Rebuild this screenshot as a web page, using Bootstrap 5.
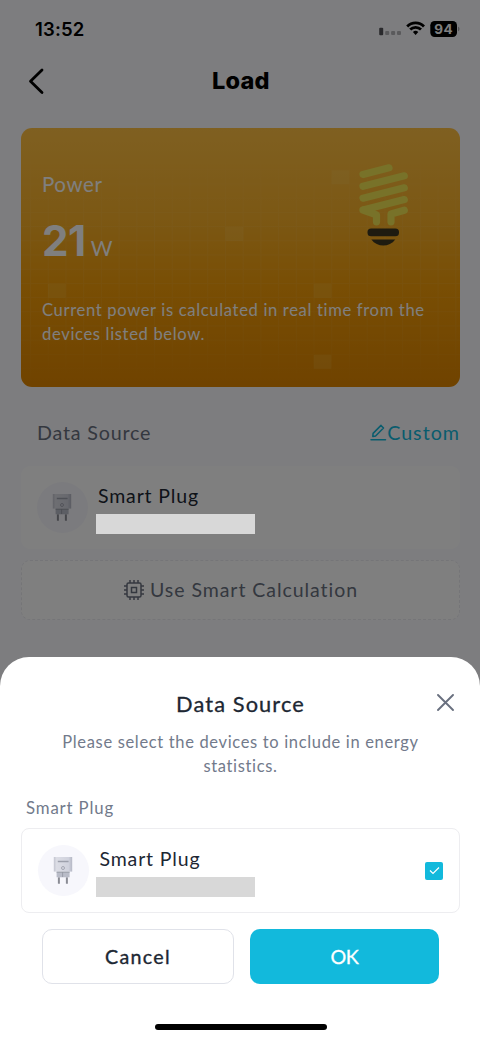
<!DOCTYPE html>
<html lang="en">
<head>
<meta charset="utf-8">
<meta name="viewport" content="width=device-width, initial-scale=1">
<title>Load</title>
<link href="https://cdn.jsdelivr.net/npm/bootstrap@5.3.0/dist/css/bootstrap.min.css" rel="stylesheet">
<style>
body{font-family:Lato,"Noto Sans",sans-serif;background:#fafafe;width:480px;height:1039px;overflow:hidden;position:relative;color:#1d2733}
svg{display:block;flex:none}
span,div,h1,h2,p,button,a{white-space:nowrap}
.status-row{height:58px;padding:0 20px 0 35px;font-family:Inter,sans-serif;color:#000}
.clock{font-size:18.5px;font-weight:600;letter-spacing:.15px;line-height:58px}
.top-row{height:45px;padding-left:27.5px}
.page-title{font-family:Inter,sans-serif;font-size:23.5px;font-weight:800;color:#000;line-height:45px;left:212px;top:0;letter-spacing:.2px}
.power-card{margin:24.5px 20px 0 21px;height:259px;border-radius:11px;background:linear-gradient(180deg,#ffc042 0%,#f8b028 35%,#f29c08 62%,#e08600 100%);color:#fff;padding:42.5px 21px 0;overflow:hidden;border:0}
.deco{left:0;top:0}
.lbl-power{font-size:20.5px;line-height:29px;letter-spacing:.6px}
.reading{margin-top:16.5px}
.num{font-family:Inter,sans-serif;font-size:42px;font-weight:700;line-height:50px;letter-spacing:-.4px}
.unit{font-size:21px;line-height:30px;margin-left:5px}
.note-text{font-size:16.6px;line-height:24px;margin-top:32px;letter-spacing:.65px}
.src-row{margin:28px 20px 0 37px;height:37px;font-size:19.7px;color:#69707f}
.src-name{letter-spacing:.8px}
.custom{color:#12b9dc;letter-spacing:1px}
.device{margin:14.5px 20px 0 21px;height:83px;border-radius:9px;background:#fff;padding:0 15.5px}
.disc{width:51px;height:51px;border-radius:50%;background:#f7f7fc;flex:none}
.dev-lines{padding-left:8px;padding-top:2.5px}
.dev-name{font-size:19.5px;line-height:26px;letter-spacing:.85px;padding-left:2.5px;margin-bottom:5px;color:#1d2733}
.redact{width:159px;height:20px;background:#d8d8d8;position:relative;z-index:3}
.calc{margin:11px 20px 0 21px;height:60px;border-radius:9px;background:#fff;border:1px dashed #ebebf0;color:#69707f;font-size:19.5px;padding-left:101px;gap:5px}
.calc span{letter-spacing:.95px}
.scrim{inset:0;background:rgba(0,0,0,.5);z-index:2}
.sheet{left:0;right:0;top:657px;height:382px;z-index:4;background:#fff;border-radius:29px 29px 0 0;padding:31px 20px 0 21px}
.sheet-title{font-size:21.8px;font-weight:400;line-height:32px;letter-spacing:1.1px;text-align:center;color:#1d2733;-webkit-text-stroke:.3px #1d2733}
.x-btn{right:26px;top:37px;background:none;border:0;padding:0}
.sheet-note{font-size:16.5px;line-height:24px;text-align:center;letter-spacing:.66px;color:#727a8b;margin-top:10px}
.group{font-size:16.8px;line-height:24px;letter-spacing:.85px;color:#727a8b;margin:18px 0 8px 5px}
.pick{height:85px;border:1px solid #ededf0;border-radius:8px;padding:0 16px 0 15.5px}
.pick .dev-lines{padding-left:7.5px}
.pick .dev-name{padding-left:3.5px}
.tick{width:18px;height:18px;border-radius:2px;background:#12b9dc}
.actions{margin:16px 21px 0;gap:16px}
.act{height:55px;border-radius:10px;font-size:19.7px;font-weight:400;padding:0;letter-spacing:1.3px}
.act-cancel{width:192px;border:1px solid #e0e2e9;color:#1d2733;background:#fff;-webkit-text-stroke:.35px #1d2733}
.act-ok{width:189px;background:#12b9dc;border:0;color:#fff;letter-spacing:-.5px;-webkit-text-stroke:.3px #fff}
.home-bar{width:172px;height:6px;border-radius:3px;background:#000;margin:40px 0 0 133.5px}
</style>
</head>
<body>
<svg width="0" height="0" class="position-absolute">
<defs>
<linearGradient id="pg" x1="0" x2="1" y1="0" y2="0"><stop offset="0" stop-color="#c3c5d0"/><stop offset=".15" stop-color="#dcdde5"/><stop offset=".8" stop-color="#d0d2dd"/><stop offset="1" stop-color="#b5b8c5"/></linearGradient>
<symbol id="plug" viewBox="0 0 20 28"><path d="M.8 0h18.400v14.600H.8z" fill="url(#pg)"/><path d="M4.800 4.500h10.800" stroke="#9da0ac" stroke-width="1.500"/><circle cx="10" cy="11" r="1.500" fill="none" stroke="#a0a3af" stroke-width=".9"/><path d="M3.600 14.700h13v5.600h-13z" fill="#b9bcc8"/><path d="M3.600 15.200h13M9.600 15v5" stroke="#92959f" stroke-width=".8"/><path d="M5.700 20.400v6.200M13.700 20.400v6.200" stroke="#b8bac3" stroke-width="1.800"/><path d="M6 20.400v6.400M14 20.400v6.400" stroke="#50525a" stroke-width=".9"/></symbol>
</defs>
</svg>
<header class="status-row d-flex justify-content-between align-items-center">
<span class="clock">13:52</span>
<svg width="82" height="18" viewBox="0 0 82 18"><g transform="translate(0 .2)"><rect x="1.200" y="7.600" width="4" height="7.400" rx="1" fill="#55555a"/><g fill="#b4b4b8"><rect x="7.200" y="10.700" width="4" height="4.200" rx="1"/><rect x="13.100" y="10.700" width="4" height="4.200" rx="1"/><rect x="19" y="10.700" width="4" height="4.200" rx="1"/></g><g fill="none" stroke="#000" stroke-width="2.800"><path d="M29.200 6.200a11.800 11.800 0 0 1 16.800 0"/><path d="M32.200 9.400a7.600 7.600 0 0 1 10.800 0"/></g><path d="M37.600 14.700l-2.700-2.800a3.900 3.900 0 0 1 5.400 0z"/><rect x="52.300" y=".7" width="26.700" height="16" rx="4.300"/><path d="M80 6.500v4.600c2-.5 2-4.100 0-4.600z" fill="#aaaaad"/></g><text x="65.700" y="13.800" text-anchor="middle" fill="#fff" font-family="Inter,sans-serif" font-weight="700" font-size="13.500" letter-spacing=".4">94</text></svg>
</header>
<nav class="top-row position-relative d-flex align-items-center">
<svg width="17" height="28" viewBox="0 0 17 28"><path d="M14 3L2.500 14.200 14 25.500" fill="none" stroke="#000" stroke-width="2.800" stroke-linecap="round" stroke-linejoin="round"/></svg>
<h1 class="page-title m-0 position-absolute">Load</h1>
</nav>
<main>
<section class="power-card position-relative">
<svg class="deco position-absolute" width="439" height="259" viewBox="0 0 439 259">
<defs>
<pattern id="grid" x="9" y="-1.300" width="17.720" height="14.200" patternUnits="userSpaceOnUse"><path d="M.5 0v14.200M0 .5h17.720" stroke="#fff" stroke-opacity=".06"/></pattern>
<linearGradient id="fd" x1="0" x2="0" y1="0" y2="1"><stop offset=".08" stop-color="#000"/><stop offset=".4" stop-color="#fff"/><stop offset=".75" stop-color="#fff"/><stop offset="1" stop-color="#000"/></linearGradient>
<mask id="gm"><rect width="439" height="259" fill="url(#fd)"/></mask>
</defs>
<rect width="439" height="259" fill="url(#grid)" mask="url(#gm)"/>
<g fill="#ffe28a" fill-opacity=".14"><path d="M204.500 99h17.700v14h-17.700z"/><path d="M310.600 42.300h17.700v14h-17.700z"/><path d="M27 155.700h17.700v14H27z"/><path d="M292.700 155.700h17.700v14h-17.700z"/><path d="M292.700 226.700h17.700v14h-17.700z"/></g>
<path d="M342 46.400L368 39.800M342 58.300L383.300 47.800M342 70.200L383.300 59.800M342 82L383.300 71.600M342 82L355.500 86.800V93.800M383.300 82.300L370 86V93.800" fill="none" stroke="#f0e552" stroke-width="7.200" stroke-linecap="round" stroke-linejoin="round"/>
<rect x="346.500" y="100.500" width="31.500" height="7.800" rx="3.600" fill="#3d3620"/><path d="M350.300 111.500h24c-6 8-18 8-24 0z" fill="#3d3620"/>
</svg>
<div class="lbl-power position-relative">Power</div>
<div class="reading d-flex align-items-baseline position-relative"><span class="num">21</span><span class="unit">W</span></div>
<p class="note-text position-relative mb-0">Current power is calculated in real time from the<br>devices listed below.</p>
</section>
<div class="src-row d-flex justify-content-between align-items-center">
<span class="src-name">Data Source</span>
<a class="custom d-flex align-items-center text-decoration-none"><svg width="17" height="17" viewBox="0 0 17 17"><path d="M1 15.800h14.500M2.800 12.400l.3-3L11 1.400l2.500 2.600-7.900 8z" fill="none" stroke="#12b9dc" stroke-width="1.500" stroke-linecap="round" stroke-linejoin="round"/></svg><span>Custom</span></a>
</div>
<section class="device d-flex align-items-center">
<div class="disc d-flex align-items-center justify-content-center"><svg width="20" height="28"><use href="#plug"/></svg></div>
<div class="dev-lines"><div class="dev-name">Smart Plug</div><div class="redact"></div></div>
</section>
<div class="calc d-flex align-items-center">
<svg width="22" height="22" viewBox="0 0 22 22"><g fill="none" stroke="#69707f" stroke-width="1.500"><rect x="4" y="4" width="14" height="14" rx="1.500"/><rect x="8.500" y="8.500" width="5" height="5"/><path d="M7 4V1M11 4V1M15 4V1M7 21v-3M11 21v-3M15 21v-3M4 7H1M4 11H1M4 15H1M21 7h-3M21 11h-3M21 15h-3"/></g></svg>
<span>Use Smart Calculation</span>
</div>
</main>
<div class="scrim position-absolute"></div>
<section class="sheet position-absolute">
<button class="x-btn position-absolute" aria-label="Close"><svg width="17" height="17" viewBox="0 0 17 17"><path d="M1 1l15 15M16 1L1 16" stroke="#69707f" stroke-width="1.900" stroke-linecap="round"/></svg></button>
<h2 class="sheet-title m-0">Data Source</h2>
<p class="sheet-note mb-0">Please select the devices to include in energy<br>statistics.</p>
<div class="group">Smart Plug</div>
<div class="pick d-flex align-items-center">
<div class="disc d-flex align-items-center justify-content-center"><svg width="20" height="28"><use href="#plug"/></svg></div>
<div class="dev-lines me-auto"><div class="dev-name">Smart Plug</div><div class="redact"></div></div>
<div class="tick"><svg width="18" height="18" viewBox="0 0 18 18"><path d="M5 8.500l3 3L14 5.500" fill="none" stroke="#fff" stroke-width="1.200"/></svg></div>
</div>
<div class="actions d-flex">
<button class="btn act act-cancel">Cancel</button>
<button class="btn act act-ok">OK</button>
</div>
<div class="home-bar"></div>
</section>
<script src="https://cdn.jsdelivr.net/npm/bootstrap@5.3.0/dist/js/bootstrap.bundle.min.js"></script>
</body>
</html>
